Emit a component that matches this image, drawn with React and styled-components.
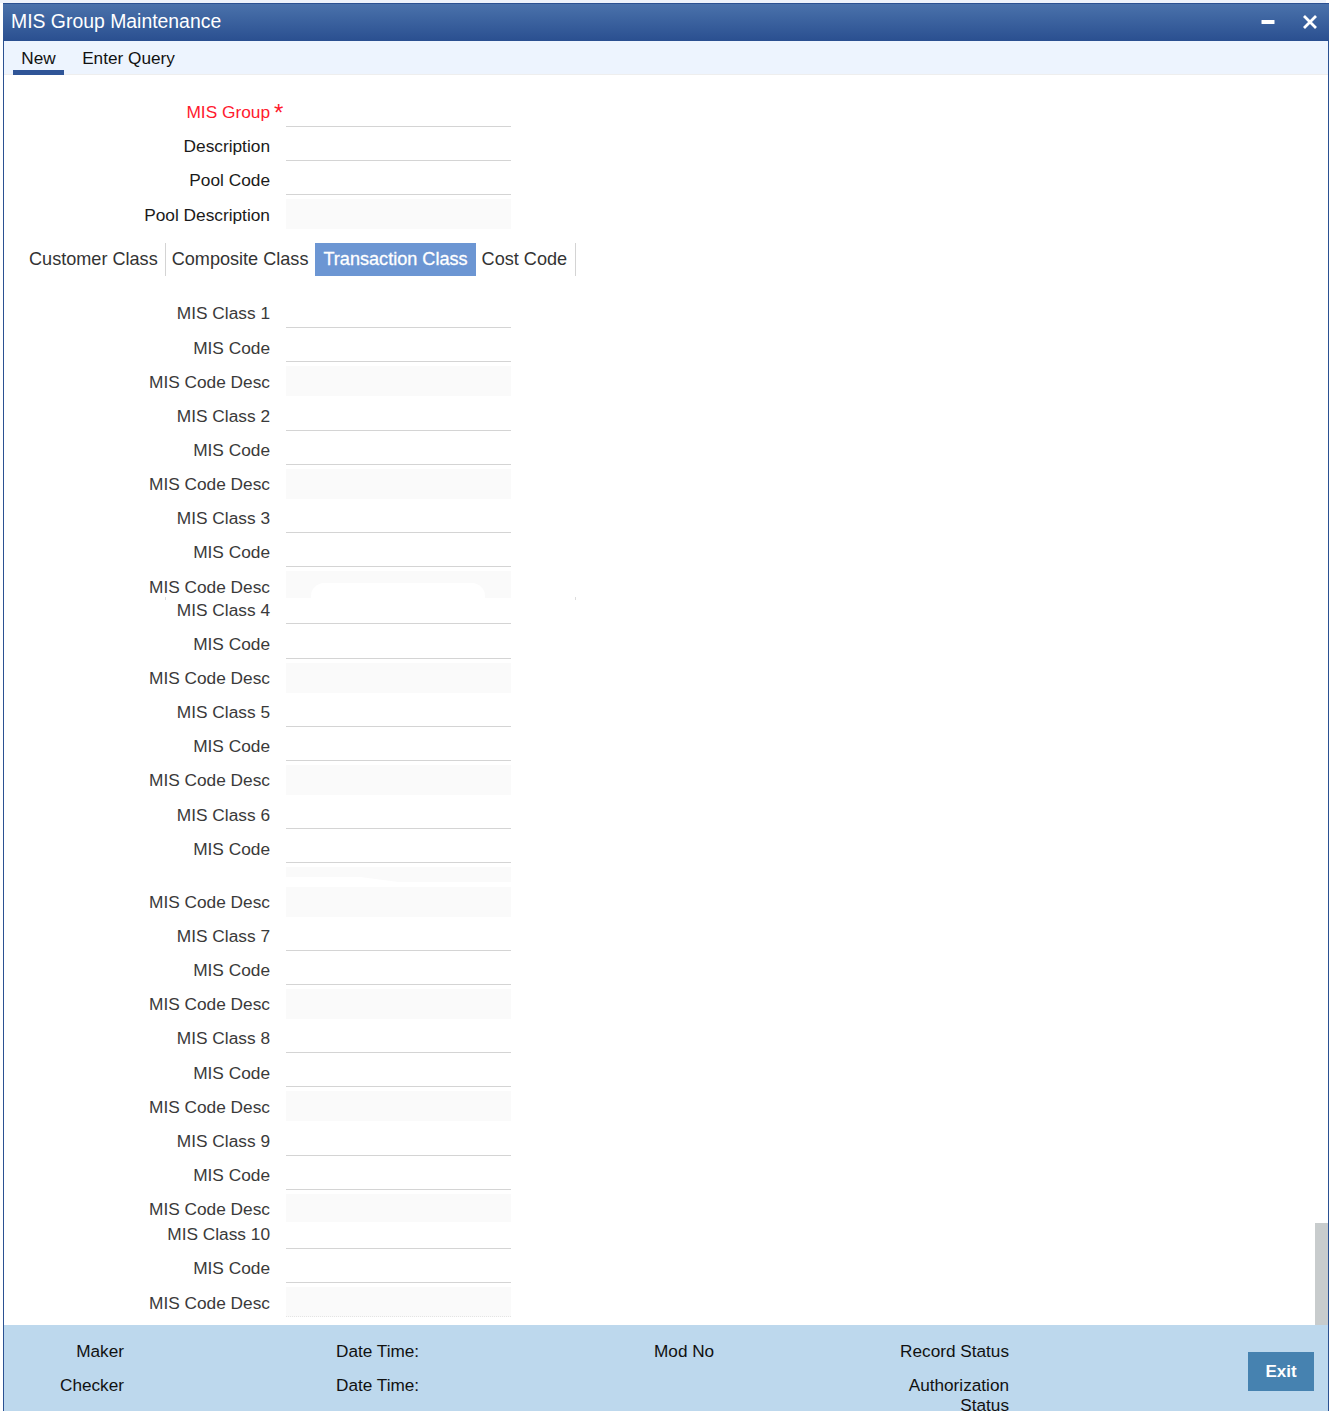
import React from "react";
import styled, { createGlobalStyle } from "styled-components";

const Global = createGlobalStyle`
  html, body { margin: 0; padding: 0; background: #fff; overflow: hidden; }
  body { font-family: "Liberation Sans", Arial, sans-serif; }
`;

const Page = styled.div`
  width: 1334px;
  height: 1411px;
  overflow: hidden;
  background: #fff;
  box-sizing: border-box;
  padding-left: 3px;
  position: relative;
`;
const TopBand = styled.div`
  height: 3px;
  width: 1326px;
  margin-left: -3px;
  background: #eef3fb;
`;
const Win = styled.div`
  width: 1326px;
  height: 1408px;
  box-sizing: border-box;
  border-left: 1px solid #2b5192;
  border-right: 1px solid #2b5192;
  display: flex;
  flex-direction: column;
`;
const TitleBar = styled.header`
  height: 38px;
  flex: none;
  margin: 0 -1px 0 -1px;
  padding: 0 6px 2px 8px;
  display: flex;
  align-items: center;
  justify-content: space-between;
  color: #fff;
  font-size: 19.4px;
  background: linear-gradient(#4a72ab, #2a4f90);
  border-top: 1px solid #2b5192;
  box-sizing: border-box;
`;
const WinButtons = styled.div`
  display: flex;
  align-items: center;
  gap: 27px;
  padding-right: 5px;
`;
const Toolbar = styled.nav`
  height: 34px;
  flex: none;
  padding-left: 9px;
  display: flex;
  background: #edf4fe;
  border-bottom: 1px solid #eee;
  box-sizing: border-box;
`;
const ToolItem = styled.div`
  box-sizing: border-box;
  height: 34px;
  width: ${(p) => p.$w}px;
  margin-right: ${(p) => p.$mr || 0}px;
  padding-top: 8px;
  text-align: center;
  font-size: 17.2px;
  line-height: 19px;
  color: #111;
  border-bottom: ${(p) => (p.$active ? "5px solid #2f5597" : "none")};
`;
const FormArea = styled.main`
  flex: 1;
  position: relative;
  overflow: hidden;
  padding-top: 22px;
`;
const Row = styled.div`
  position: relative;
  display: flex;
  align-items: flex-end;
  height: ${(p) => p.$h}px;
`;
const Label = styled.label`
  width: 266px;
  flex: none;
  box-sizing: border-box;
  text-align: right;
  font-size: 17.3px;
  line-height: 18px;
  white-space: nowrap;
  margin-bottom: ${(p) => p.$off}px;
  color: ${(p) => (p.$req ? "#ff1a2e" : p.$dark ? "#1a1a1a" : "#3a3a3a")};
`;
const Marker = styled.span`
  width: 16px;
  flex: none;
  align-self: flex-start;
  box-sizing: border-box;
  padding: 4px 0 0 4px;
  font-size: 24px;
  line-height: 24px;
  color: #ff1a2e;
`;
const LineField = styled.div`
  width: 225px;
  height: 26px;
  box-sizing: border-box;
  border-bottom: 1.5px solid #d4d4d4;
`;
const ReadField = styled.div`
  position: relative;
  width: 225px;
  height: ${(p) => p.$fh}px;
  box-sizing: border-box;
  background: #fafafa;
  border-bottom: ${(p) => (p.$dotted ? "1px dotted #e4e4e4" : "none")};
`;
const Wedge = styled(ReadField)`
  clip-path: polygon(0 0, 100% 0, 100% 100%, 50% 100%, 33% 66%, 0 66%);
`;
const Notch = styled.div`
  position: absolute;
  left: 25px;
  bottom: 0;
  width: 174px;
  height: 15px;
  background: #fff;
  border-radius: 13px 13px 0 0;
`;
const Tick = styled.i`
  position: absolute;
  left: ${(p) => p.$x}px;
  bottom: -2px;
  width: 1px;
  height: 3px;
  background: #ddd;
`;
const Tabs = styled.div`
  display: flex;
  height: 33px;
  margin: 14px 0 11px 25px;
  width: fit-content;
`;
const Tab = styled.div`
  box-sizing: border-box;
  height: 33px;
  line-height: 33px;
  font-size: 18.1px;
  white-space: nowrap;
  padding: ${(p) => p.$pad};
  color: ${(p) => (p.$active ? "#fff" : "#333")};
  background: ${(p) => (p.$active ? "#6c96d3" : "transparent")};
  border-right: ${(p) => (p.$sep ? "1px solid #d4d4d4" : "none")};
  -webkit-text-stroke: ${(p) => (p.$active ? "0.3px #fff" : "0")};
`;
const Thumb = styled.div`
  position: absolute;
  right: 0;
  bottom: 0;
  width: 13px;
  height: 102px;
  background: #c8cccd;
`;
const Footer = styled.footer`
  height: 86px;
  flex: none;
  display: flex;
  position: relative;
  overflow: hidden;
  background: #bdd8ed;
  padding-top: 16px;
  box-sizing: border-box;
  font-size: 17.2px;
  line-height: 20px;
  color: #111;
`;
const FootCol = styled.div`
  width: ${(p) => p.$w}px;
  margin-right: ${(p) => p.$mr || 0}px;
  flex: none;
  text-align: ${(p) => p.$align || "left"};
  display: flex;
  flex-direction: column;
  gap: 14px;
`;
const ExitButton = styled.button`
  position: absolute;
  right: 14px;
  top: 27px;
  width: 66px;
  height: 39px;
  border: none;
  background: #4682b0;
  color: #fff;
  font: bold 17px "Liberation Sans", Arial, sans-serif;
`;

const top = [
  ["MIS Group", "line", 112, 127],
  ["Description", "line", 146, 161],
  ["Pool Code", "line", 180, 195],
  ["Pool Description", "read", 215, 229],
];
const rows = [
  ["MIS Class 1", "line", 313, 328], ["MIS Code", "line", 348, 362], ["MIS Code Desc", "read", 382, 396],
  ["MIS Class 2", "line", 416, 431], ["MIS Code", "line", 450, 465], ["MIS Code Desc", "read", 484, 499],
  ["MIS Class 3", "line", 518, 533], ["MIS Code", "line", 552, 567], ["MIS Code Desc", "notch", 587, 598],
  ["MIS Class 4", "line", 610, 624], ["MIS Code", "line", 644, 659], ["MIS Code Desc", "read", 678, 693],
  ["MIS Class 5", "line", 712, 727], ["MIS Code", "line", 746, 761], ["MIS Code Desc", "read", 780, 795],
  ["MIS Class 6", "line", 815, 829], ["MIS Code", "line", 849, 863], ["", "wedge", 0, 882], ["MIS Code Desc", "read", 902, 917],
  ["MIS Class 7", "line", 936, 951], ["MIS Code", "line", 970, 985], ["MIS Code Desc", "read", 1004, 1019],
  ["MIS Class 8", "line", 1038, 1053], ["MIS Code", "line", 1073, 1087], ["MIS Code Desc", "read", 1107, 1121],
  ["MIS Class 9", "line", 1141, 1156], ["MIS Code", "line", 1175, 1190], ["MIS Code Desc", "short", 1209, 1222],
  ["MIS Class 10", "line", 1234, 1249], ["MIS Code", "line", 1268, 1283], ["MIS Code Desc", "last", 1303, 1317],
];

function Field({ kind }) {
  if (kind === "line") return <LineField />;
  if (kind === "wedge") return <Wedge $fh={15} />;
  if (kind === "notch") return <ReadField $fh={27}><Notch /></ReadField>;
  if (kind === "short") return <ReadField $fh={28} />;
  return <ReadField $fh={30} $dotted={kind === "last"} />;
}

function renderRows(list, start, dark) {
  let prev = start;
  return list.map(([label, kind, center, bottom], i) => {
    const h = bottom - prev;
    prev = bottom;
    return (
      <Row key={i} $h={h}>
        <Label $off={Math.max(0, bottom - center - 9)} $dark={dark} $req={label === "MIS Group"}>{label}</Label>
        <Marker>{label === "MIS Group" ? "*" : ""}</Marker>
        <Field kind={kind} />
        {kind === "notch" && <><Tick $x={161} /><Tick $x={571} /></>}
      </Row>
    );
  });
}

export default function App() {
  return (
    <Page>
      <Global />
      <TopBand />
      <Win>
        <TitleBar>
          <span>MIS Group Maintenance</span>
          <WinButtons>
            <svg width="14" height="14" viewBox="0 0 14 14"><rect x="0.5" y="5" width="13" height="4" rx="0.5" fill="#fff" /></svg>
            <svg width="16" height="16" viewBox="0 0 16 16"><path d="M2 2 L14 14 M14 2 L2 14" stroke="#fff" strokeWidth="2.8" /></svg>
          </WinButtons>
        </TitleBar>
        <Toolbar>
          <ToolItem $w={51} $mr={9} $active>New</ToolItem>
          <ToolItem $w={111}>Enter Query</ToolItem>
        </Toolbar>
        <FormArea>
          {renderRows(top, 97, true)}
          <Tabs>
            <Tab $pad="0 7px 0 0" $sep>Customer Class</Tab>
            <Tab $pad="0 7px 0 6px">Composite Class</Tab>
            <Tab $pad="0 8px" $active>Transaction Class</Tab>
            <Tab $pad="0 8px 0 6px" $sep>Cost Code</Tab>
          </Tabs>
          {renderRows(rows, 287, false)}
          <Thumb />
        </FormArea>
        <Footer>
          <FootCol $w={120} $mr={212} $align="right"><span>Maker</span><span>Checker</span></FootCol>
          <FootCol $w={120} $mr={198}><span>Date Time:</span><span>Date Time:</span></FootCol>
          <FootCol $w={100} $mr={135}><span>Mod No</span></FootCol>
          <FootCol $w={120} $align="right"><span>Record Status</span><span>Authorization<br />Status</span></FootCol>
          <ExitButton>Exit</ExitButton>
        </Footer>
      </Win>
    </Page>
  );
}
